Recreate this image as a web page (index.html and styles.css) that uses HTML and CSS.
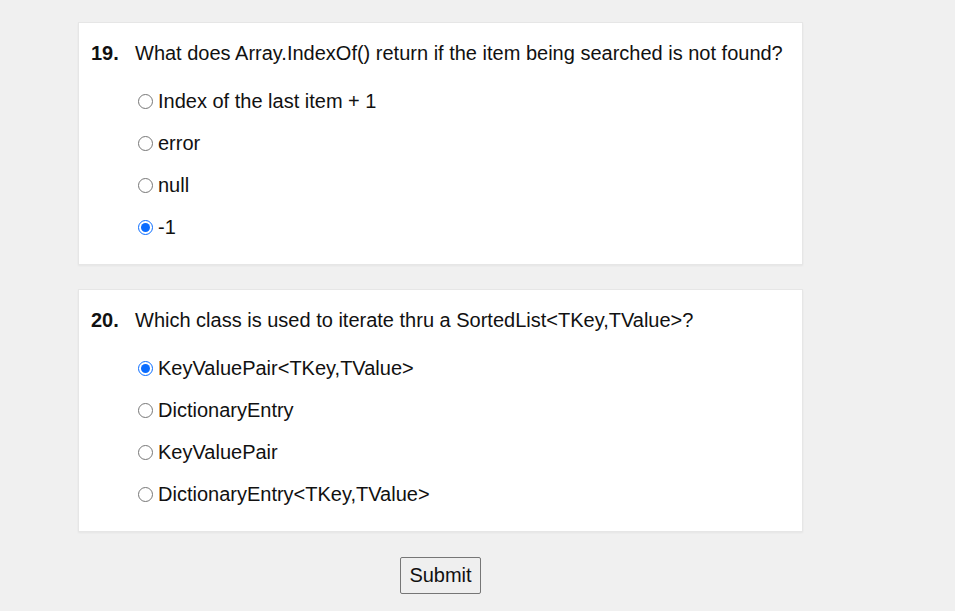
FILE: index.html
```html
<!DOCTYPE html>
<html>
<head>
<meta charset="utf-8">
<link rel="stylesheet" href="styles.css">
</head>
<body>
<form class="quiz">
  <div class="card">
    <div class="question"><span class="num">19.</span><span class="text">What does Array.IndexOf() return if the item being searched is not found?</span></div>
    <div class="options">
      <label class="option"><input type="radio" name="q19"><span>Index of the last item + 1</span></label>
      <label class="option"><input type="radio" name="q19"><span>error</span></label>
      <label class="option"><input type="radio" name="q19"><span>null</span></label>
      <label class="option"><input type="radio" name="q19" checked><span>-1</span></label>
    </div>
  </div>
  <div class="card">
    <div class="question"><span class="num">20.</span><span class="text">Which class is used to iterate thru a SortedList&lt;TKey,TValue&gt;?</span></div>
    <div class="options">
      <label class="option"><input type="radio" name="q20" checked><span>KeyValuePair&lt;TKey,TValue&gt;</span></label>
      <label class="option"><input type="radio" name="q20"><span>DictionaryEntry</span></label>
      <label class="option"><input type="radio" name="q20"><span>KeyValuePair</span></label>
      <label class="option"><input type="radio" name="q20"><span>DictionaryEntry&lt;TKey,TValue&gt;</span></label>
    </div>
  </div>
  <div class="actions"><button type="button" class="submit">Submit</button></div>
</form>
</body>
</html>
```
FILE: styles.css
```css
html, body {
  margin: 0;
  padding: 0;
  background: #f0f0f0;
  font-family: "Liberation Sans", Arial, sans-serif;
  color: #111;
}
.quiz {
  width: 725px;
  margin-left: 78px;
  padding-top: 22px;
  display: flex;
  flex-direction: column;
  gap: 24px;
}
.card {
  background: #fff;
  border: 1px solid #e6e6e6;
  box-shadow: 0 1px 2px rgba(0,0,0,0.05);
  padding: 18px 12px 16px 12px;
}
.question {
  display: flex;
  font-size: 20px;
  line-height: 24px;
}
.num {
  font-weight: bold;
  width: 44px;
  flex: none;
}
.options {
  margin-top: 15px;
  padding-left: 42px;
  display: flex;
  flex-direction: column;
}
.option {
  display: flex;
  align-items: center;
  height: 42px;
  font-size: 20px;
}
.option input {
  width: 15px;
  height: 15px;
  margin: 0 5px 0 5px;
  accent-color: #0a6cff;
}
.actions {
  display: flex;
  justify-content: center;
  margin-top: 1px;
}
.submit {
  font-family: "Liberation Sans", Arial, sans-serif;
  font-size: 20px;
  color: #111;
  background: #efefef;
  border: 1px solid #767676;
  border-radius: 2px;
  padding: 4px 8px;
  height: 37px;
}
```
